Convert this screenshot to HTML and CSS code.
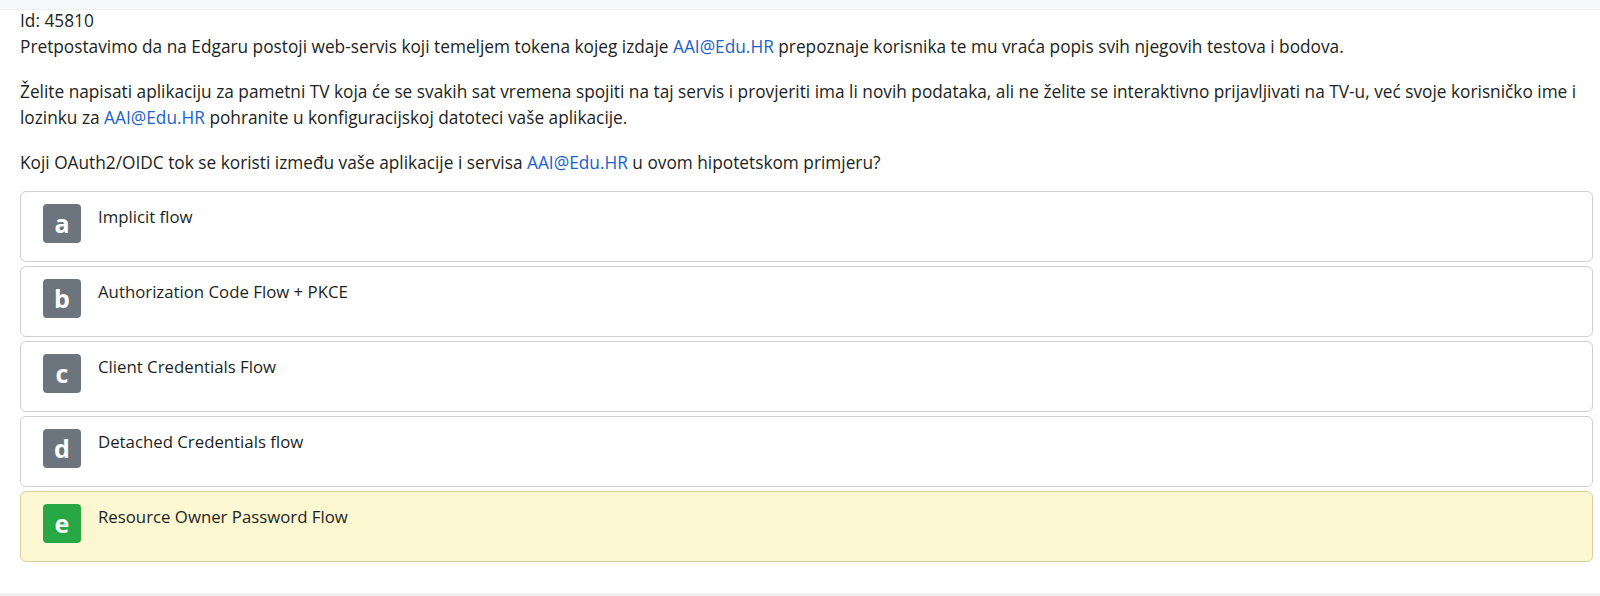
FILE: index.html
```html
<!DOCTYPE html>
<html lang="hr">
<head>
<meta charset="utf-8">
<title>Pitanje 45810</title>
<link rel="stylesheet" href="styles.css">
</head>
<body>
<div class="page">
  <div class="topbar"></div>
  <main class="content">
    <div class="qid">Id: 45810</div>
    <p>Pretpostavimo da na Edgaru postoji web-servis koji temeljem tokena kojeg izdaje <a href="#">AAI@Edu.HR</a> prepoznaje korisnika te mu vraća popis svih njegovih testova i bodova.</p>
    <p>Želite napisati aplikaciju za pametni TV koja će se svakih sat vremena spojiti na taj servis i provjeriti ima li novih podataka, ali ne želite se interaktivno prijavljivati na TV-u, već svoje korisničko ime i lozinku za <a href="#">AAI@Edu.HR</a> pohranite u konfiguracijskoj datoteci vaše aplikacije.</p>
    <p class="last">Koji OAuth2/OIDC tok se koristi između vaše aplikacije i servisa <a href="#">AAI@Edu.HR</a> u ovom hipotetskom primjeru?</p>
    <div class="answers">
      <div class="answer"><span class="badge">a</span><span class="label">Implicit flow</span></div>
      <div class="answer"><span class="badge">b</span><span class="label">Authorization Code Flow + PKCE</span></div>
      <div class="answer"><span class="badge">c</span><span class="label">Client Credentials Flow</span></div>
      <div class="answer"><span class="badge">d</span><span class="label">Detached Credentials flow</span></div>
      <div class="answer correct"><span class="badge">e</span><span class="label">Resource Owner Password Flow</span></div>
    </div>
  </main>
  <div class="bottombar"></div>
</div>
</body>
</html>
```
FILE: styles.css
```css
html, body {
  margin: 0;
  padding: 0;
  background: #ffffff;
}
body {
  font-family: "Open Sans", "Noto Sans", "DejaVu Sans", sans-serif;
  font-size: 17.27px;
  color: #1c1f23;
}
.page {
  height: 596px;
  display: flex;
  flex-direction: column;
  overflow: hidden;
}
.topbar {
  height: 9px;
  background: #f8f9fa;
  border-bottom: 1px solid #eceef0;
  flex: none;
}
.content {
  padding: 0 7px 0 20px;
}
.qid {
  line-height: 22px;
  margin-bottom: 2px;
}
.content p {
  margin: 0 0 19.5px 0;
  line-height: 25.5px;
}
.content p.last {
  margin-bottom: 16px;
}
.content a {
  color: #1a62c8;
  text-decoration: none;
}
.answers {
  display: flex;
  flex-direction: column;
  gap: 4px;
}
.answer {
  display: flex;
  align-items: flex-start;
  gap: 17px;
  border: 1px solid #cfcfcf;
  border-radius: 6px;
  padding: 12px 12px 18px 22px;
  background: #ffffff;
}
.answer.correct {
  background: #fdf8d1;
  border-color: #d7cf9f;
}
.badge {
  flex: none;
  width: 38px;
  height: 39px;
  border-radius: 4px;
  background: #6c757d;
  color: #ffffff;
  font-weight: 700;
  font-size: 25px;
  display: flex;
  align-items: center;
  justify-content: center;
  line-height: 1;
}
.correct .badge {
  background: #28a745;
}
.label {
  font-size: 16.8px;
  line-height: 24px;
  padding-top: 1px;
}
.bottombar {
  margin-top: auto;
  height: 3px;
  background: #f0f0f0;
  flex: none;
}
```
